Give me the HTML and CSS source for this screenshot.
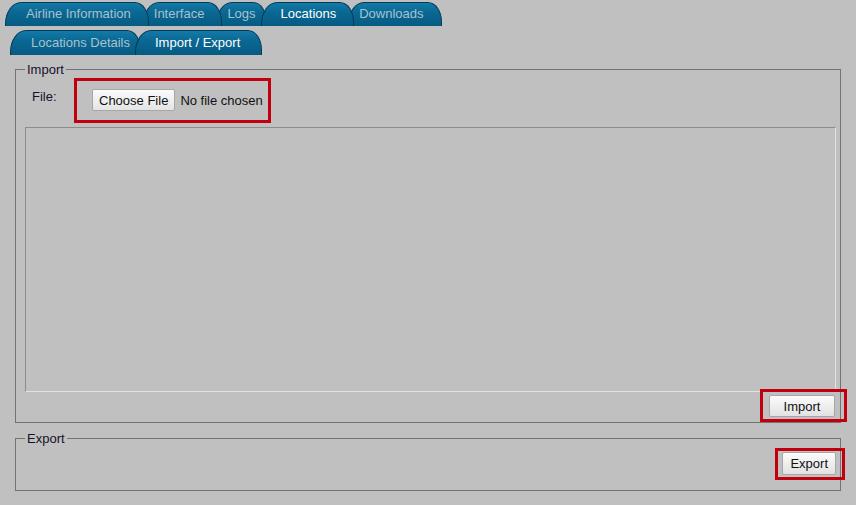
FILE: index.html
```html
<!DOCTYPE html>
<html lang="en">
<head>
    <meta charset="UTF-8">
    <meta name="viewport" content="width=device-width, initial-scale=1.0">
    <title>Locations - Import / Export</title>
    <link rel="stylesheet" href="styles.css">
</head>
<body>
    <div class="tabs main-tabs">
        <a class="tab first">Airline Information</a>
        <a class="tab">Interface</a>
        <a class="tab tight">Logs</a>
        <a class="tab active">Locations</a>
        <a class="tab">Downloads</a>
    </div>
    <div class="tabs sub-tabs">
        <a class="tab first tight">Locations Details</a>
        <a class="tab active">Import / Export</a>
    </div>

    <fieldset class="group import-group">
        <legend>Import</legend>
        <div class="file-row">
            <label for="file-input">File:</label>
            <div class="mark file-mark">
                <input type="file" id="file-input">
            </div>
        </div>
        <textarea class="log-box" readonly></textarea>
        <div class="actions import-actions">
            <div class="mark">
                <button class="btn import-btn">Import</button>
            </div>
        </div>
    </fieldset>

    <fieldset class="group export-group">
        <legend>Export</legend>
        <div class="actions export-actions">
            <div class="mark">
                <button class="btn export-btn">Export</button>
            </div>
        </div>
    </fieldset>
</body>
</html>
```

FILE: styles.css
```css
:root { --tab-line: #053a55; --mark: #c0000c; --text: #16122a; }
body { margin: 0; background-color: #c0c0c0; font-family: "Liberation Sans", Arial, sans-serif; font-size: 13px; color: var(--text); }

.tabs { display: flex; }
.main-tabs { padding: 2px 0 0 5px; }
.sub-tabs { margin-top: 4px; padding-left: 10px; }
.tab { position: relative; display: block; height: 23px; line-height: 22px; padding: 0 17px 0 10px; margin-left: -6px; background: linear-gradient(#137aa8, #0a6893 40%, #065b82); border: 1px solid var(--tab-line); border-bottom: 0; border-radius: 16px 14px 0 0 / 22px 20px 0 0; color: #a8c2ce; white-space: nowrap; cursor: pointer; }
.sub-tabs .tab { height: 24px; line-height: 24px; }
.tab.first { margin-left: 0; padding-left: 20px; }
.tab.tight { padding-right: 10px; }
.tab.active { padding-left: 19px; color: #fff; }
.sub-tabs .tab.active { padding-right: 21px; }
.tab:nth-child(1) { z-index: 5; }
.tab:nth-child(2) { z-index: 4; }
.tab:nth-child(3) { z-index: 3; }
.tab:nth-child(5) { z-index: 1; }
.tab.active:nth-child(n) { z-index: 10; }

.group { margin: 7px 15px 0; padding: 0 4px 0 9px; border: 1px solid #737373; min-width: 0; }
.group legend { padding: 0 2px; line-height: 15px; }
.export-group { margin-top: 8px; padding-bottom: 10px; }

.mark { border: 3px solid var(--mark); }
.file-row { display: flex; align-items: flex-start; margin-top: 1px; }
.file-row label { width: 42px; margin: 11px 0 0 7px; }
.file-mark { padding: 8px 5px 9px 15px; }
#file-input { width: 171px; font: inherit; font-size: 13px; color: #111; }
#file-input::file-selector-button { font: inherit; height: 22px; padding: 0 6px; margin-right: 5px; border: 1px solid #a7a7a7; border-radius: 2px; background: linear-gradient(#fbfbfb, #e4e4e4); color: #111; }

.log-box { display: block; box-sizing: border-box; width: 100%; height: 265px; margin-top: 4px; background: transparent; border: 1px solid; border-color: #8d8d8d #e2e2e2 #e2e2e2 #8d8d8d; resize: none; }

.actions { display: flex; justify-content: flex-end; }
.import-actions { margin: -3px -11px 0 0; }
.import-actions .mark { padding: 3px 9px 2px 6px; }
.export-actions { margin: 2px -9px 0 0; }
.export-actions .mark { padding: 1px 6px 2px 4px; }
.btn { font: inherit; font-size: 13px; color: #111; height: 22px; padding: 0 7px; border: 1px solid #a7a7a7; border-radius: 2px; background: linear-gradient(#fbfbfb, #e2e2e2); cursor: pointer; }
.import-btn { width: 66px; }
.export-btn { height: 23px; }
```
